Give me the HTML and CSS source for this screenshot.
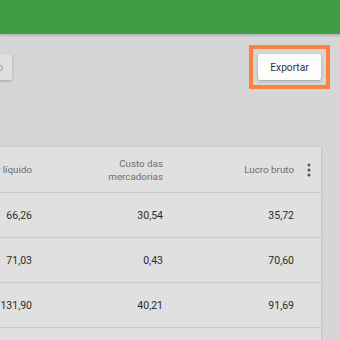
FILE: index.html
```html
<!DOCTYPE html>
<html>
<head>
    <meta charset="UTF-8">
    <title>Relatório</title>
    <link rel="stylesheet" href="styles.css">
</head>
<body>
<div class="topbar"></div>
<div class="toolbar">
    <button class="btn btn-dim">Período</button>
    <span class="highlight"><button class="btn">Exportar</button></span>
</div>
<div class="card">
    <div class="row head">
        <div class="cell">Valor líquido</div>
        <div class="cell">Custo das<br>mercadorias</div>
        <div class="cell">Lucro bruto</div>
        <div class="cell menu">
            <svg width="4" height="14" viewBox="0 0 4 14"><circle cx="2" cy="2" r="1.5"/><circle cx="2" cy="7" r="1.5"/><circle cx="2" cy="12" r="1.5"/></svg>
        </div>
    </div>
    <div class="row">
        <div class="cell">66,26</div>
        <div class="cell">30,54</div>
        <div class="cell">35,72</div>
        <div class="cell"></div>
    </div>
    <div class="row">
        <div class="cell">71,03</div>
        <div class="cell">0,43</div>
        <div class="cell">70,60</div>
        <div class="cell"></div>
    </div>
    <div class="row">
        <div class="cell">131,90</div>
        <div class="cell">40,21</div>
        <div class="cell">91,69</div>
        <div class="cell"></div>
    </div>
    <div class="row">
        <div class="cell">&nbsp;</div>
        <div class="cell"></div>
        <div class="cell"></div>
        <div class="cell"></div>
    </div>
</div>
</body>
</html>
```
FILE: styles.css
```css
html,body{margin:0;padding:0;overflow:hidden;}
body{background:#d6d6d6;font-family:Roboto,"Liberation Sans",sans-serif;width:340px;height:340px;}

.topbar{height:34px;background:#409c45;box-shadow:0 1px 3px rgba(0,0,0,0.25);position:relative;}

.toolbar{display:flex;justify-content:space-between;align-items:flex-start;padding:11px 10px 0 0;height:47px;}
.btn{font-family:inherit;font-size:10.2px;color:#333;background:#fdfdfd;border:none;border-radius:2px;
    height:26px;width:63px;padding:0;box-shadow:0 1px 3px rgba(0,0,0,0.25);display:block;}
.btn-dim{background:#e0e0e0;color:#a0a0a0;margin-top:9px;margin-left:-51px;text-align:right;padding-right:9px;}
.highlight{display:block;border:4px solid #ff8142;padding:5px;}

.card{margin:55px 19px 0 -99px;background:#e0e0e0;box-shadow:0 1px 3px rgba(0,0,0,0.2);}
.row{display:grid;grid-template-columns:131px 131px 131px 27px;height:44px;align-items:center;border-bottom:1px solid #cbcbcb;
    font-size:10.5px;color:#2b2b2b;}
.row.head{height:45px;color:#6e6e6e;line-height:13px;font-size:9.8px;}
.cell{text-align:right;}
.menu{display:flex;justify-content:center;fill:#555;padding-left:2px;}
```
